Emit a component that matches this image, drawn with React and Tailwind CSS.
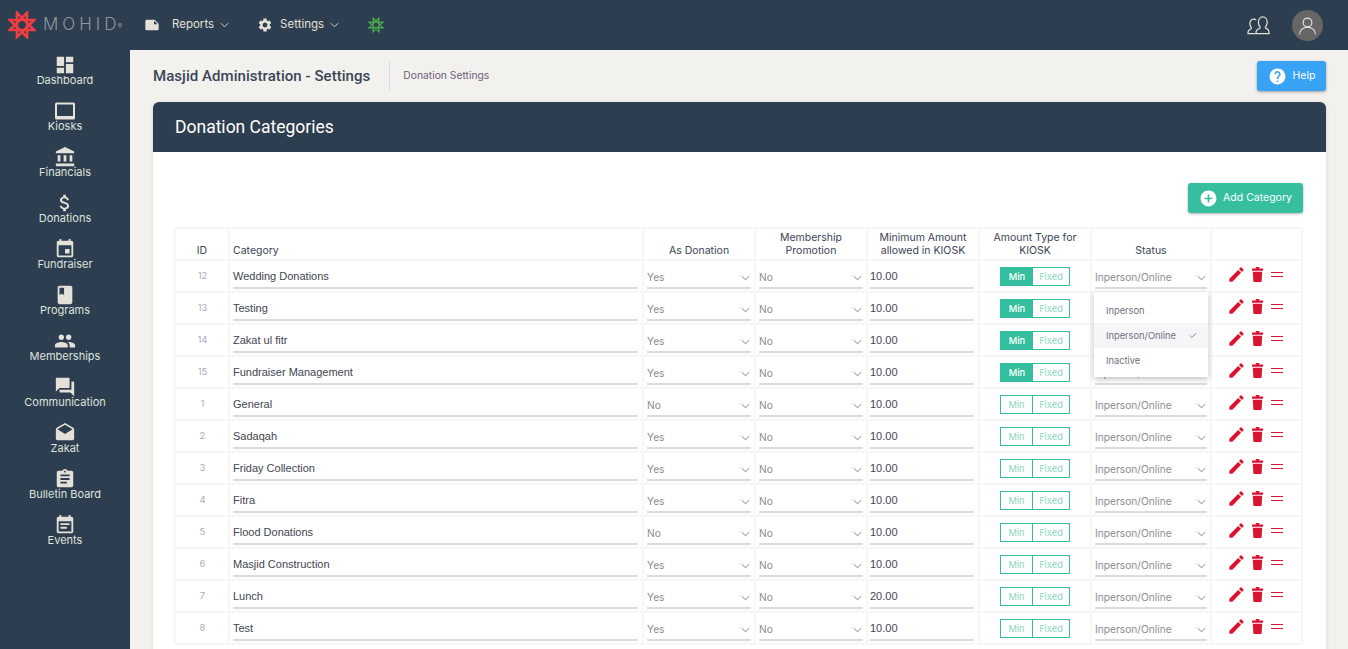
import {
  MdAccountBalance,
  MdAddCircle,
  MdAssignment,
  MdAttachMoney,
  MdBook,
  MdDashboard,
  MdDrafts,
  MdEdit,
  MdEvent,
  MdEventNote,
  MdHelp,
  MdNote,
  MdPeople,
  MdQuestionAnswer,
  MdSettings,
} from "react-icons/md";

const ui = "font-['Inter','Open_Sans',sans-serif]";

const KioskIcon = ({ className }) => (
  <svg viewBox="0 0 22 22" className={className} fill="currentColor" fillRule="evenodd">
    <path d="M2.500 2.500h17a1.500 1.500 0 0 1 1.500 1.500v14a1.500 1.500 0 0 1-1.500 1.500h-17A1.500 1.500 0 0 1 1 18V4a1.500 1.500 0 0 1 1.500-1.500zM3 4.500V16h16V4.500z" />
  </svg>
);

const navItems = [
  { label: "Dashboard", Icon: MdDashboard },
  { label: "Kiosks", Icon: KioskIcon },
  { label: "Financials", Icon: MdAccountBalance },
  { label: "Donations", Icon: MdAttachMoney },
  { label: "Fundraiser", Icon: MdEvent },
  { label: "Programs", Icon: MdBook },
  { label: "Memberships", Icon: MdPeople },
  { label: "Communication", Icon: MdQuestionAnswer },
  { label: "Zakat", Icon: MdDrafts },
  { label: "Bulletin Board", Icon: MdAssignment },
  { label: "Events", Icon: MdEventNote },
];

const rows = [
  { id: 12, name: "Wedding Donations", donation: "Yes", amount: "10.00", min: true },
  { id: 13, name: "Testing", donation: "Yes", amount: "10.00", min: true },
  { id: 14, name: "Zakat ul fitr", donation: "Yes", amount: "10.00", min: true },
  { id: 15, name: "Fundraiser Management", donation: "Yes", amount: "10.00", min: true },
  { id: 1, name: "General", donation: "No", amount: "10.00" },
  { id: 2, name: "Sadaqah", donation: "Yes", amount: "10.00" },
  { id: 3, name: "Friday Collection", donation: "Yes", amount: "10.00" },
  { id: 4, name: "Fitra", donation: "Yes", amount: "10.00" },
  { id: 5, name: "Flood Donations", donation: "No", amount: "10.00" },
  { id: 6, name: "Masjid Construction", donation: "Yes", amount: "10.00" },
  { id: 7, name: "Lunch", donation: "Yes", amount: "20.00" },
  { id: 8, name: "Test", donation: "Yes", amount: "10.00" },
];

const Chevron = ({ className = "" }) => (
  <svg viewBox="0 0 10 6" className={`w-[9px] h-[6px] ${className}`} fill="none" stroke="currentColor" strokeWidth="1">
    <path d="M1 1l4 4 4-4" />
  </svg>
);

// eight pointed {8/3} star, the points sit 22.5deg off the axes
const starPoints = Array.from({ length: 8 }, (_, i) => {
  const a = ((22.5 + i * 135) * Math.PI) / 180;
  return `${(16 + 15 * Math.cos(a)).toFixed(2)},${(16 + 15 * Math.sin(a)).toFixed(2)}`;
}).join(" ");

const Star = ({ color, width, className }) => (
  <svg viewBox="0 0 32 32" className={className} fill="none" stroke={color} strokeWidth={width} strokeLinejoin="miter">
    <polygon points={starPoints} />
  </svg>
);

const TrashIcon = () => (
  <svg viewBox="0 0 13 16" className="w-[11px] h-[15px]" preserveAspectRatio="none" fill="currentColor">
    <path d="M4.500 0h4v1.500H13V4H0V1.500h4.500z" />
    <path d="M1 5h11l-.6 10a1 1 0 0 1-1 1H2.600a1 1 0 0 1-1-1z" />
  </svg>
);

const PeopleOutline = () => (
  <svg viewBox="0 0 24 22" className="w-[23px] h-[21px] text-[#e4e1d8]" fill="none" stroke="currentColor" strokeWidth="1.300">
    <path d="M9.500 17.500c0-2 1.600-2.600 3.600-3.500.8-.4.8-1.400.2-2.200-1-1.100-1.400-2.400-1.400-4 0-3 1.700-5.800 4.600-5.800s4.600 2.800 4.600 5.800c0 1.600-.4 2.900-1.400 4-.6.800-.6 1.800.2 2.200 1.800.9 3.100 1.500 3.100 3.500v2H9.500z" />
    <path d="M9 19.500H1v-1.800c0-1.600 1.200-2.200 2.900-3 .8-.4.900-1.300.3-2-.9-1-1.200-2.200-1.200-3.600 0-2.700 1.500-4.900 4-4.900 1 0 1.900.3 2.600.9" />
  </svg>
);

const Select = ({ value }) => (
  <div className="flex items-center justify-between h-[28px] pt-[7px] border-b-2 border-[#dcdcdc] text-[10.200px] text-[#8a8d93]">
    <span>{value}</span>
    <Chevron className="mr-[1px] text-[#6b7280]" />
  </div>
);

const Row = ({ row }) => (
  <tr className="h-[32px] border-b-2 border-[#f7f7f7]">
    <td className="border-r-2 border-[#f7f7f7] text-center align-top pt-[8px] pl-[1px] text-[9.500px] text-[#a8adb8]">{row.id}</td>
    <td className="border-r-2 border-[#f7f7f7] pl-[3px] pr-[4px] align-top">
      <div className="h-[28px] border-b-2 border-[#dcdcdc] pt-[8px] font-['Liberation_Sans',sans-serif] text-[11px] leading-[14px] text-[#3f4550]">{row.name}</div>
    </td>
    <td className="border-r-2 border-[#f7f7f7] px-[3px] align-top"><Select value={row.donation} /></td>
    <td className="border-r-2 border-[#f7f7f7] px-[3px] align-top"><Select value="No" /></td>
    <td className="border-r-2 border-[#f7f7f7] pl-[2px] pr-[4px] align-top">
      <div className="h-[28px] border-b-2 border-[#dcdcdc] pt-[8px] font-['Liberation_Sans',sans-serif] text-[11px] leading-[14px] text-[#3f4550]">{row.amount}</div>
    </td>
    <td className="border-r-2 border-[#f7f7f7] align-top pt-[6px]">
      <div className="mx-auto flex w-[70px] h-[19px] border border-[#35bf9f] text-[9.300px] leading-[17px] text-center">
        <span className={row.min ? "w-[32px] bg-[#35bf9f] text-white font-medium" : "w-[32px] border-r border-[#35bf9f] text-[#8fd6bf]"}>Min</span>
        <span className="flex-1 text-[#8fd6bf]">Fixed</span>
      </div>
    </td>
    <td className="border-r-2 border-[#f7f7f7] px-[3px] align-top"><Select value="Inperson/Online" /></td>
    <td className="align-top pt-[4px]">
      <div className="flex items-center pl-[15px] text-[#dc1431]">
        <MdEdit size={19} />
        <div className="ml-[6px]"><TrashIcon /></div>
        <div className="ml-[8px] w-[12px] h-[5px] border-y border-[#dc1431] -mt-[1px]" />
      </div>
    </td>
  </tr>
);

const App = () => (
  <div className={`${ui} h-[649px] w-[1348px] overflow-hidden bg-[#2d3e50] flex flex-col`}>
    <header className="h-[50px] shrink-0 flex items-center text-[#e4e1d8]">
      <div className="w-[130px] flex items-center pl-[8px]">
        <Star color="#ef3d42" width={3} className="w-[28px] h-[28px] shrink-0" />
        <span className="ml-[7px] text-[17px] font-light text-[#8f969c]">
          <span className="tracking-[4px]">MOHI</span>D
        </span>
        <span className="ml-[1px] mt-[5px] text-[7px] text-[#8f969c]">®</span>
      </div>
      <nav className="flex items-center text-[11.500px]">
        <div className="ml-[14px] flex items-center">
          <MdNote size={16} />
          <span className="ml-[12px]">Reports</span>
          <Chevron className="ml-[6px]" />
        </div>
        <div className="ml-[28px] flex items-center">
          <MdSettings size={16} />
          <span className="ml-[7px]">Settings</span>
          <Chevron className="ml-[6px]" />
        </div>
        <Star color="#4caf50" width={2.400} className="ml-[29px] w-[16px] h-[16px]" />
      </nav>
      <div className="ml-auto flex items-center pr-[25px]">
        <PeopleOutline />
        <div className="ml-[22px] w-[31px] h-[31px] rounded-full bg-[#666666] flex items-center justify-center">
          <svg viewBox="0 0 24 24" className="w-[21px] h-[21px] text-[#e8e8e8]" fill="none" stroke="currentColor" strokeWidth="1.300">
            <circle cx="12" cy="8.500" r="5" />
            <path d="M3 22c0-5 4-8 9-8s9 3 9 8" />
          </svg>
        </div>
      </div>
    </header>

    <div className="flex flex-1 min-h-0">
      <aside className="w-[130px] shrink-0 pt-[4px] flex flex-col items-center">
        {navItems.map(({ label, Icon }) => (
          <div key={label} className="h-[46px] flex flex-col items-center text-[#dfe2dc]">
            <Icon size={22} className="w-[22px] h-[22px] text-[#e4e1d8]" />
            <span className="-mt-[2px] text-[11px] leading-[13px] whitespace-nowrap">{label}</span>
          </div>
        ))}
      </aside>

      <main className="flex-1 min-w-0 bg-[#f3f1ee] pl-[23px] pr-[22px]">
        <div className="h-[52px] flex items-start">
          <div className="h-[30px] mt-[11px] flex items-center pr-[19px] border-r border-[#dcdde0]">
            <h1 className="font-['Roboto',sans-serif] font-medium text-[15px] tracking-[0.05px] text-[#3a4658]">Masjid Administration - Settings</h1>
          </div>
          <span className="mt-[18px] ml-[13px] text-[10.300px] text-[#6b5f7c]">Donation Settings</span>
          <button className="ml-auto mt-[11px] h-[30px] w-[69px] rounded-[3px] bg-[#38a3f5] shadow-[0_1px_3px_rgba(0,0,0,0.35)] flex items-center justify-center gap-[6px] text-white text-[10.500px]">
            <MdHelp size={19} />
            Help
          </button>
        </div>

        <section className="rounded-t-[6px] bg-white shadow-[0_1px_4px_rgba(0,0,0,0.12)] h-[600px]">
          <div className="h-[50px] rounded-t-[6px] bg-[#2d3e50] flex items-center pl-[22px]">
            <h2 className="font-['Roboto',sans-serif] font-normal text-[17.500px] text-white">Donation Categories</h2>
          </div>
          <div className="pl-[21px] pr-[23px]">
            <div className="h-[75px] flex justify-end items-start pt-[31px]">
              <button className="h-[30px] w-[115px] rounded-[3px] bg-[#35bf9f] shadow-[0_1px_3px_rgba(0,0,0,0.3)] flex items-center justify-center gap-[5px] text-white text-[10.500px]">
                <MdAddCircle size={19} />
                Add Category
              </button>
            </div>
            <div className="relative">
              <table className="w-[1127px] table-fixed border-collapse border-t-2 border-l-2 border-r-2 border-[#f7f7f7]">
                <colgroup>
                  <col className="w-[54px]" />
                  <col className="w-[414px]" />
                  <col className="w-[112px]" />
                  <col className="w-[112px]" />
                  <col className="w-[112px]" />
                  <col className="w-[112px]" />
                  <col className="w-[120px]" />
                  <col className="w-[91px]" />
                </colgroup>
                <thead>
                  <tr className="h-[32px] border-b-2 border-[#f7f7f7] text-[10.500px] leading-[13px] text-[#3b4458]">
                    <th className="border-r-2 border-[#f7f7f7] align-bottom font-normal pb-[2px]">ID</th>
                    <th className="border-r-2 border-[#f7f7f7] align-bottom text-left pl-[3px] font-normal pb-[2px]">Category</th>
                    <th className="border-r-2 border-[#f7f7f7] align-bottom font-normal pb-[2px]">As Donation</th>
                    <th className="border-r-2 border-[#f7f7f7] align-bottom font-normal pb-[2px]">Membership<br />Promotion</th>
                    <th className="border-r-2 border-[#f7f7f7] align-bottom font-normal pb-[2px]">Minimum Amount<br />allowed in KIOSK</th>
                    <th className="border-r-2 border-[#f7f7f7] align-bottom font-normal pb-[2px]">Amount Type for<br />KIOSK</th>
                    <th className="border-r-2 border-[#f7f7f7] align-bottom font-normal pb-[2px]">Status</th>
                    <th />
                  </tr>
                </thead>
                <tbody>
                  {rows.map((row) => (
                    <Row key={row.id} row={row} />
                  ))}
                </tbody>
              </table>

              {/* open status dropdown */}
              <div className="absolute left-[920px] top-[65px] w-[114px] h-[85px] bg-white shadow-[0_2px_6px_rgba(0,0,0,0.25)] pt-[6px] text-[9.300px] text-[#6b7280]">
                <div className="h-[25px] pl-[12px] flex items-center">Inperson</div>
                <div className="h-[25px] pl-[12px] pr-[11px] flex items-center justify-between bg-[#f6f6f8]">
                  Inperson/Online
                  <svg viewBox="0 0 10 8" className="w-[8px] h-[7px]" fill="none" stroke="#6b7280" strokeWidth="1"><path d="M1 4l2.500 2.500L9 1" /></svg>
                </div>
                <div className="h-[25px] pl-[12px] flex items-center">Inactive</div>
              </div>
            </div>
          </div>
        </section>
      </main>
    </div>
  </div>
);

export default App;
